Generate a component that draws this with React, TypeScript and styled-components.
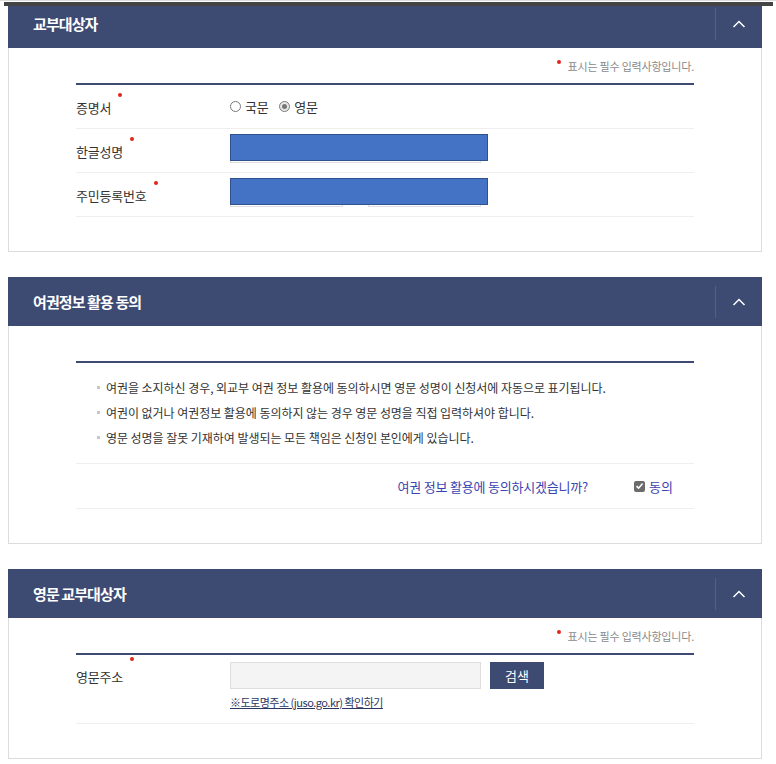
import React from "react";
import styled, { createGlobalStyle } from "styled-components";

const GlobalStyle = createGlobalStyle`
  html, body { margin: 0; padding: 0; background: #fff; }
  body {
    font-family: "Noto Sans CJK KR", "Noto Sans", sans-serif;
    color: #333;
    -webkit-font-smoothing: antialiased;
  }
  * { box-sizing: border-box; }
`;

const NAVY = "#3d4a72";

const TopStrip = styled.div`
  height: 6px;
  border-top: 1px solid #dcdcdc;
  padding: 1px 3px 0 4px;
`;

const DarkBar = styled.div`
  height: 4px;
  background: #444;
`;

const Page = styled.div`
  padding: 0 14px 7px 8px;
`;

const Section = styled.section`
  & + & { margin-top: 25px; }
`;

const Header = styled.div<{ $cropped?: boolean }>`
  display: flex;
  align-items: center;
  height: ${(p) => (p.$cropped ? "42px" : "49px")};
  padding-bottom: ${(p) => (p.$cropped ? "7px" : "0")};
  background: ${NAVY};
  color: #fff;
`;

const Title = styled.h2`
  flex: 1;
  margin: 0;
  padding-left: 25px;
  font-size: 15px;
  font-weight: 700;
  letter-spacing: -0.9px;
  line-height: 22px;
`;

const Separator = styled.span`
  width: 1px;
  height: 32px;
  background: #54608a;
`;

const Toggle = styled.button`
  width: 46px;
  height: 32px;
  display: flex;
  align-items: center;
  justify-content: center;
  background: transparent;
  border: 0;
  padding: 0;
  cursor: pointer;
`;

const Body = styled.div`
  border: 1px solid #dcdcdc;
  border-top: 0;
  padding: 0 67px 34px;
`;

const NoteRow = styled.div`
  height: 35px;
  display: flex;
  align-items: center;
  justify-content: flex-end;
  font-size: 11px;
  color: #8a8a8a;
  letter-spacing: -0.2px;
`;

const Dot = styled.span`
  display: inline-block;
  width: 4px;
  height: 4px;
  border-radius: 50%;
  background: #e3241d;
  vertical-align: top;
`;

const NoteDot = styled(Dot)`
  margin: -7px 7px 0 0;
`;

const Table = styled.div`
  border-top: 2px solid ${NAVY};
`;

const Row = styled.div<{ $tall?: boolean }>`
  display: flex;
  align-items: ${(p) => (p.$tall ? "flex-start" : "center")};
  min-height: ${(p) => (p.$tall ? "69px" : "44px")};
  padding-top: ${(p) => (p.$tall ? "7px" : "0")};
  border-bottom: 1px solid #eee;
`;

const Label = styled.div<{ $tall?: boolean }>`
  width: 154px;
  flex-shrink: 0;
  font-size: 13px;
  line-height: ${(p) => (p.$tall ? "29px" : "20px")};
  color: #333;
  padding-top: ${(p) => (p.$tall ? "0" : "3px")};
  letter-spacing: -0.2px;
`;

const LabelDot = styled(Dot)`
  margin-left: 7px;
  position: relative;
  top: -5px;
`;

const Value = styled.div<{ $lift?: boolean }>`
  position: relative;
  display: flex;
  flex-direction: column;
  margin-bottom: ${(p) => (p.$lift ? "4px" : "0")};
`;

const Inline = styled.div`
  display: flex;
  align-items: center;
`;

const RadioLabel = styled.label`
  display: flex;
  align-items: center;
  font-size: 13px;
  color: #333;
  margin-right: 11px;
  letter-spacing: -0.3px;
`;

const RadioCircle = styled.span<{ $checked?: boolean }>`
  width: 11px;
  height: 11px;
  border-radius: 50%;
  border: 1px solid #7a7a7a;
  background: ${(p) => (p.$checked ? "#e8e8e8" : "#fff")};
  margin-right: 4px;
  display: flex;
  align-items: center;
  justify-content: center;
  &::after {
    content: "";
    display: ${(p) => (p.$checked ? "block" : "none")};
    width: 5px;
    height: 5px;
    border-radius: 50%;
    background: #777;
  }
`;

const TextInput = styled.input<{ $w: number; $gray?: boolean }>`
  width: ${(p) => p.$w}px;
  height: ${(p) => (p.$gray ? "27px" : "29px")};
  border: 1px solid #dedede;
  background: ${(p) => (p.$gray ? "#f4f4f4" : "#fff")};
  padding: 0 8px;
  font: inherit;
  font-size: 12px;
  outline: none;
`;

const Dash = styled.span`
  width: 25px;
  text-align: center;
  font-size: 12px;
  color: #555;
`;

const Redact = styled.div`
  position: absolute;
  left: 0;
  top: 0;
  width: 258px;
  height: 27px;
  background: #4472c4;
  border: 1px solid #2f528f;
`;

const Bullets = styled.ul`
  list-style: none;
  margin: 0;
  padding: 12px 0 13px 21px;
`;

const Bullet = styled.li`
  display: flex;
  align-items: center;
  height: 25px;
  font-size: 12px;
  color: #333;
  letter-spacing: -0.05px;
  &::before {
    content: "";
    width: 3px;
    height: 3px;
    background: #c8c8c8;
    margin-right: 6px;
    flex-shrink: 0;
  }
`;

const AgreeRow = styled.div`
  display: flex;
  align-items: center;
  justify-content: flex-end;
  height: 46px;
  border-top: 1px solid #eee;
  border-bottom: 1px solid #eee;
  padding-right: 21px;
`;

const Question = styled.span`
  font-size: 13px;
  color: #3a44b0;
  margin-right: 46px;
  letter-spacing: -0.2px;
`;

const CheckLabel = styled.label`
  display: flex;
  align-items: center;
  font-size: 13px;
  color: #3a44b0;
`;

const CheckBox = styled.span`
  width: 11px;
  height: 11px;
  border-radius: 2px;
  background: #6b6b6b;
  margin-right: 4px;
  display: flex;
  align-items: center;
  justify-content: center;
`;

const SearchButton = styled.button`
  width: 54px;
  height: 27px;
  margin-left: 9px;
  border: 0;
  background: ${NAVY};
  color: #fff;
  font: inherit;
  font-size: 13px;
  cursor: pointer;
`;

const Link = styled.a`
  margin-top: 6px;
  font-size: 11px;
  line-height: 14px;
  color: #2a3761;
  text-decoration: underline;
  letter-spacing: -0.5px;
`;

const Chevron = () => (
  <svg width="14" height="8" viewBox="0 0 14 8" fill="none">
    <polyline points="1.5,7 7,1.5 12.5,7" stroke="#fff" strokeWidth="1.5" />
  </svg>
);

const Check = () => (
  <svg width="9" height="8" viewBox="0 0 9 8" fill="none">
    <polyline points="1.5,4.2 3.6,6.2 7.6,1.6" stroke="#fff" strokeWidth="1.6" />
  </svg>
);

const SectionHeader = ({ title, cropped }: { title: string; cropped?: boolean }) => (
  <Header $cropped={cropped}>
    <Title>{title}</Title>
    <Separator />
    <Toggle aria-label="접기">
      <Chevron />
    </Toggle>
  </Header>
);

const Required = () => (
  <NoteRow>
    <NoteDot />
    표시는 필수 입력사항입니다.
  </NoteRow>
);

export default function App() {
  return (
    <>
      <GlobalStyle />
      <TopStrip>
        <DarkBar />
      </TopStrip>
      <Page>
        <Section>
          <SectionHeader title="교부대상자" cropped />
          <Body>
            <Required />
            <Table>
              <Row>
                <Label>
                  증명서
                  <LabelDot />
                </Label>
                <Inline>
                  <RadioLabel>
                    <RadioCircle />
                    국문
                  </RadioLabel>
                  <RadioLabel>
                    <RadioCircle $checked />
                    영문
                  </RadioLabel>
                </Inline>
              </Row>
              <Row>
                <Label>
                  한글성명
                  <LabelDot />
                </Label>
                <Value $lift>
                  <TextInput $w={251} />
                  <Redact />
                </Value>
              </Row>
              <Row>
                <Label>
                  주민등록번호
                  <LabelDot />
                </Label>
                <Value $lift>
                  <Inline>
                    <TextInput $w={113} />
                    <Dash>-</Dash>
                    <TextInput $w={113} />
                  </Inline>
                  <Redact />
                </Value>
              </Row>
            </Table>
          </Body>
        </Section>

        <Section>
          <SectionHeader title="여권정보 활용 동의" />
          <Body>
            <NoteRow />
            <Table>
              <Bullets>
                <Bullet>여권을 소지하신 경우, 외교부 여권 정보 활용에 동의하시면 영문 성명이 신청서에 자동으로 표기됩니다.</Bullet>
                <Bullet>여권이 없거나 여권정보 활용에 동의하지 않는 경우 영문 성명을 직접 입력하셔야 합니다.</Bullet>
                <Bullet>영문 성명을 잘못 기재하여 발생되는 모든 책임은 신청인 본인에게 있습니다.</Bullet>
              </Bullets>
              <AgreeRow>
                <Question>여권 정보 활용에 동의하시겠습니까?</Question>
                <CheckLabel>
                  <CheckBox>
                    <Check />
                  </CheckBox>
                  동의
                </CheckLabel>
              </AgreeRow>
            </Table>
          </Body>
        </Section>

        <Section>
          <SectionHeader title="영문 교부대상자" />
          <Body>
            <Required />
            <Table>
              <Row $tall>
                <Label $tall>
                  영문주소
                  <LabelDot />
                </Label>
                <Value>
                  <Inline>
                    <TextInput $w={251} $gray readOnly />
                    <SearchButton>검색</SearchButton>
                  </Inline>
                  <Link href="#">※도로명주소 (juso.go.kr) 확인하기</Link>
                </Value>
              </Row>
            </Table>
          </Body>
        </Section>
      </Page>
    </>
  );
}
